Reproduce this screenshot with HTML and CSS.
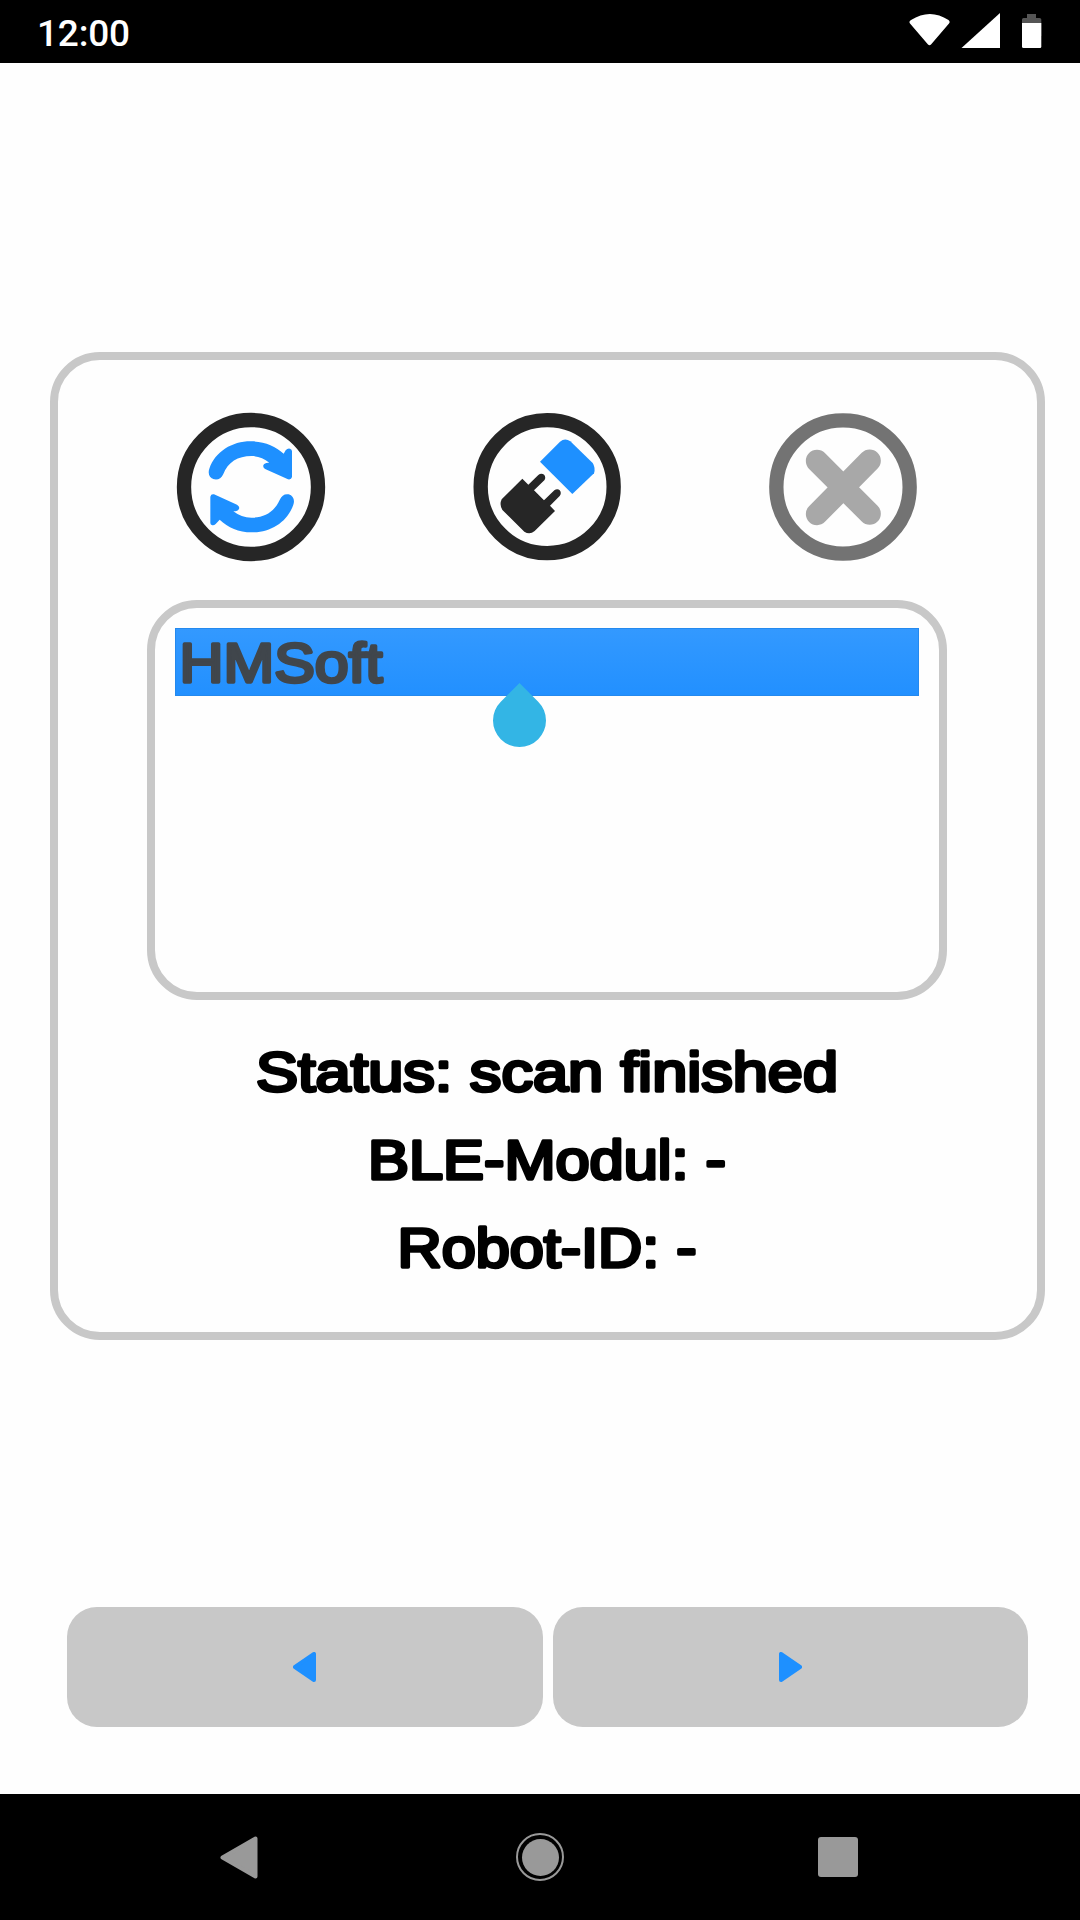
FILE: index.html
```html
<!DOCTYPE html>
<html lang="en">
<head>
<meta charset="utf-8">
<title>Bluetooth</title>
<link rel="stylesheet" href="styles.css">
</head>
<body>
<header class="status-bar">
  <span class="clock">12:00</span>
  <svg class="status-icons" width="134" height="36" viewBox="908 13 134 36">
    <path fill="#fff" d="M910 23.500Q908.500 21.500 911 20Q930 8 948.500 20Q950.500 21.500 949 23.500L931 44.500Q929.500 46 928 44.500Z"/>
    <path fill="#fff" d="M1000 13V48H961.500Z"/>
    <path fill="#555" d="M1022 36V19.500Q1022 18 1023.500 18H1027V14H1036V18H1039.500Q1041.300 18 1041.300 19.500V36Z"/>
    <path fill="#fff" d="M1022 23H1041.300V46.500Q1041.300 48 1040 48H1023.500Q1022 48 1022 46.500Z"/>
  </svg>
</header>

<main class="screen">
  <section class="panel">
    <div class="actions">
      <svg width="150" height="150" viewBox="48 36 450 450">
        <circle class="ring" cx="273" cy="261" r="201"/>
        <path class="blue" d="M148 206C166 154 218 123 274 124C314 124 346 138 371 161L377 151Q383 144 390 146Q396 148 396 154V231Q394 240 384 238L317 208Q308 203 310 196Q313 187 328 188C312 175 294 168 274 168C234 168 203 187 190 222C184 236 174 240 162 238C148 234 143 220 148 206Z"/>
        <path class="blue" d="M400 314C382 367 331 398 275 397C236 397 204 382 179 359L167 372Q161 378 155 375Q151 373 151 368V290Q153 281 162 283L231 314Q240 320 237 326Q234 334 220 334C236 347 254 353 274 353C315 353 344 334 359 300C365 286 374 281 386 283C400 287 405 301 400 314Z"/>
      </svg>
      <svg width="150" height="150" viewBox="36 36 450 450">
        <circle class="ring" cx="261.500" cy="260" r="199.500"/>
        <path class="blue" d="M240 185L300 125Q315 113 331 124L398 189Q407 203 402 220L337 282Z"/>
        <path class="dark" d="M187 236L205 254L235 225C247 215 262 228 253 241L222 271L252 301L283 271C295 261 309 275 299 288L270 317L285 333L224 393Q209 406 193 395L128 331Q117 315 125 298Z"/>
      </svg>
      <svg width="150" height="150" viewBox="54 36 450 450">
        <circle class="ring ring-off" cx="279" cy="261" r="200"/>
        <path class="cross" d="M201 183L359 341M359 182L201 342"/>
      </svg>
    </div>

    <div class="devices">
      <div class="device">
        <svg class="label" width="220" height="66" viewBox="0 0 220 66"><text x="3.500" y="52.500" textLength="203" lengthAdjust="spacingAndGlyphs">HMSoft</text></svg>
      </div>
      <svg class="handle" width="53" height="63" viewBox="0 0 53 63"><path d="M26.500 0L45.200 18.700A26.500 26.500 0 1 1 7.800 18.700Z"/></svg>
    </div>

    <div class="info">
      <svg class="label" width="800" height="88" viewBox="0 0 800 88"><text x="400" y="61" text-anchor="middle" textLength="582" lengthAdjust="spacingAndGlyphs">Status: scan finished</text></svg>
      <svg class="label" width="800" height="88" viewBox="0 0 800 88"><text x="400" y="61" text-anchor="middle" textLength="358" lengthAdjust="spacingAndGlyphs">BLE-Modul: -</text></svg>
      <svg class="label" width="800" height="88" viewBox="0 0 800 88"><text x="400" y="61" text-anchor="middle" textLength="299" lengthAdjust="spacingAndGlyphs">Robot-ID: -</text></svg>
    </div>
  </section>

  <div class="pager">
    <button class="page-button" aria-label="Previous"><svg width="23" height="30" viewBox="0 0 23 30"><path class="arrow" d="M21 2V28L2 15Z"/></svg></button>
    <button class="page-button" aria-label="Next"><svg width="23" height="30" viewBox="0 0 23 30"><path class="arrow" d="M2 2V28L21 15Z"/></svg></button>
  </div>
</main>

<footer class="nav-bar">
  <svg width="38" height="43" viewBox="0 0 38 43"><path class="nav-shape" d="M35.500 2.500V40.500L2.500 21.500Z"/></svg>
  <svg width="48" height="48" viewBox="0 0 48 48"><circle cx="24" cy="24" r="23" fill="none" stroke="#999" stroke-width="2"/><circle cx="24.500" cy="24.500" r="18.500" fill="#999"/></svg>
  <svg width="40" height="40" viewBox="0 0 40 40"><rect width="40" height="40" rx="3" fill="#999"/></svg>
</footer>
</body>
</html>
```
FILE: styles.css
```css
* { box-sizing: border-box; }

body {
  margin: 0;
  width: 1080px;
  height: 1920px;
  display: flex;
  flex-direction: column;
  background: #fefefe;
  font-family: "Liberation Sans", Arial, sans-serif;
  overflow: hidden;
}

svg { display: block; flex: none; }

.status-bar {
  height: 63px;
  padding: 0 38px 0 37px;
  display: flex;
  align-items: center;
  justify-content: space-between;
  background: #000;
  color: #fff;
}

.status-icons { margin-bottom: 1px; }

.clock {
  font: 500 37px/1 Roboto, sans-serif;
  letter-spacing: -0.2px;
  padding-top: 3px;
}

.screen {
  flex: 1;
  padding: 289px 35px 0 50px;
}

.panel {
  height: 988px;
  border: 8px solid #c8c8c8;
  border-radius: 50px;
  padding-top: 52px;
  display: flex;
  flex-direction: column;
  align-items: center;
}

.actions {
  display: flex;
  gap: 146px;
  margin-right: 1px;
}

.ring { fill: #fefefe; stroke: #262626; stroke-width: 43px; }
.ring-off { stroke: #737373; }
.blue { fill: #1e90ff; }
.dark { fill: #262626; }
.cross { stroke: #a8a8a8; stroke-width: 67px; stroke-linecap: round; }

.devices {
  position: relative;
  width: 800px;
  height: 400px;
  margin: 38px 1px 0 0;
  padding: 20px;
  border: 8px solid #c8c8c8;
  border-radius: 50px;
}

.device {
  width: 744px;
  height: 68px;
  background: linear-gradient(#3399ff, #2290ff);
  border: 1px solid #2489ee;
}

.handle {
  position: absolute;
  left: 338px;
  top: 75px;
  fill: #33b5e5;
  overflow: visible;
}

.label text {
  font-size: 56px;
  fill: #000;
  stroke: #000;
  stroke-width: 3.4px;
  stroke-linejoin: round;
}

.device text { fill: #40464c; stroke: #40464c; }

.info { margin: 30px 2px 0 0; }

.pager {
  display: flex;
  gap: 10px;
  margin: 267px 17px 0 17px;
}

.page-button {
  flex: 1;
  height: 120px;
  border: 0;
  border-radius: 30px;
  background: #c8c8c8;
  display: flex;
  align-items: center;
  justify-content: center;
}

.arrow { fill: #1e90ff; stroke: #1e90ff; stroke-width: 4px; stroke-linejoin: round; }

.nav-bar {
  height: 126px;
  padding: 0 222px 0 220px;
  display: grid;
  grid-template-columns: 1fr auto 1fr;
  align-items: center;
  background: #000;
}

.nav-bar svg:nth-child(2) { margin-left: 2px; }
.nav-bar svg:last-child { justify-self: end; }
.nav-shape { fill: #999; stroke: #999; stroke-width: 4px; stroke-linejoin: round; }
```
